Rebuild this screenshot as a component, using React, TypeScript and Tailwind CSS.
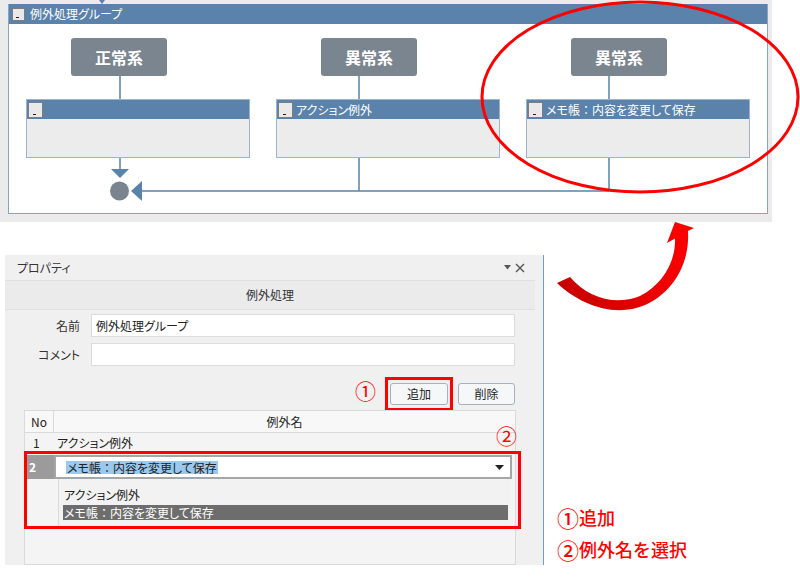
import React from "react";

// full-width colon keeps its em width, as in the original UI font
function Memo() {
  return (
    <>
      メモ帳<span className="[font-feature-settings:normal]">：</span>内容を変更して保存
    </>
  );
}

const columns = [
  { title: "正常系", label: null as React.ReactNode },
  { title: "異常系", label: "アクション例外" as React.ReactNode },
  { title: "異常系", label: <Memo /> },
];

function Collapse({ big }: { big?: boolean }) {
  return (
    <span
      className={`flex shrink-0 items-end justify-center border border-[#7d7d7d] bg-[#e9e9e9] pb-[2px] ${
        big ? "h-[16px] w-[15px]" : "h-[13px] w-[13px]"
      }`}
    >
      <span className="mr-[2px] h-[1px] w-[3px] bg-[#222]" />
    </span>
  );
}

function Diagram() {
  return (
    <div className="h-[222px] w-[772px] bg-[#ebebeb] pl-[8px] pt-[4px]">
      <div className="h-[210px] w-[760px] border-x border-b border-[#86a4c6] bg-white">
        <div className="flex h-[20px] items-center gap-[5px] bg-[#5a82aa] pl-[3px] text-[12px] text-white">
          <Collapse />
          <span>例外処理グループ</span>
        </div>
        <div className="flex gap-[26px] pl-[17px] pt-[14px]">
          {columns.map((c, i) => (
            <div key={i} className="w-[224px]">
              <div className="ml-[45px] flex h-[38px] w-[96px] items-center justify-center rounded-[3px] bg-[#7b858f] text-[16px] font-bold text-white">
                {c.title}
              </div>
              <div className="mt-[23px] h-[59px] border border-[#9db4cd] bg-[#ececec]">
                <div className="flex h-[19px] items-center gap-[3px] bg-[#5a82aa] pl-[1px] text-[12px] text-white">
                  <Collapse big />
                  <span>{c.label}</span>
                </div>
              </div>
            </div>
          ))}
        </div>
      </div>
    </div>
  );
}

function Panel() {
  return (
    <div className="ml-[5px] mt-[33px] h-[310px] w-[539px] border-r border-[#6a9fd4] bg-[#f0f0f0]">
      <div className="flex h-[25px] items-center justify-between pl-[12px] pr-[18px] text-[12px] text-[#333]">
        <span>プロパティ</span>
        <div className="flex items-center gap-[4px]">
          <svg width="7" height="5" viewBox="0 0 7 5">
            <path d="M0 0 H7 L3.5 4.5 Z" fill="#555" />
          </svg>
          <svg width="10" height="10" viewBox="0 0 10 10">
            <path d="M1 1 L9 9 M9 1 L1 9" stroke="#555" strokeWidth="1.4" />
          </svg>
        </div>
      </div>
      <div className="mr-[8px] flex h-[30px] items-center justify-center border-y border-[#e0e0e0] bg-[#ebebeb] text-[12px] text-[#333]">
        例外処理
      </div>
      <div className="relative">
        <div className="mt-[4px] flex items-center">
          <span className="w-[77px] pr-[2px] text-right text-[12px] text-[#333]">名前</span>
          <div className="ml-[9px] flex h-[23px] w-[424px] items-center border border-[#dcdcdc] bg-white pl-[4px] text-[12px] text-[#222]">
            例外処理グループ
          </div>
        </div>
        <div className="mt-[6px] flex items-center">
          <span className="w-[77px] pr-[2px] text-right text-[12px] text-[#333]">コメント</span>
          <div className="ml-[9px] h-[23px] w-[424px] border border-[#dcdcdc] bg-white" />
        </div>
        <div className="mt-[17px] flex items-center">
          <span className="-mt-[8px] ml-[350px] w-[35px] text-[21px] leading-none text-[#ff0000] [font-feature-settings:normal]">①</span>
          <div className="relative">
            <div className="flex h-[22px] w-[58px] items-center justify-center rounded-[3px] border border-[#a3b1c1] bg-[#f5f7f9] text-[12px] text-[#222]">
              追加
            </div>
            <div className="absolute -left-[5px] -top-[6px] h-[34px] w-[68px] border-[3px] border-[#ff0000]" />
          </div>
          <div className="ml-[10px] flex h-[22px] w-[57px] items-center justify-center rounded-[3px] border border-[#a3b1c1] bg-[#f5f7f9] text-[12px] text-[#222]">
            削除
          </div>
        </div>

        <div className="relative ml-[19px] mt-[5px] h-[155px] w-[492px] border border-[#dadada] bg-[#f4f4f4] text-[12px] text-[#222]">
          <div className="flex h-[22px] border-b border-[#dadada] bg-[#f8f8f8]">
            <div className="flex w-[29px] items-center justify-center border-r border-[#dadada]">No</div>
            <div className="flex flex-1 items-center justify-center">例外名</div>
          </div>
          <div className="flex h-[19px] items-center">
            <div className="w-[29px] pl-[8px]">1</div>
            <div className="pl-[3px]">アクション例外</div>
          </div>
          <div className="mt-[3px] flex h-[24px]">
            <div className="flex w-[29px] items-center bg-[#9b9b9b] pl-[4px] font-bold text-white">2</div>
            <div className="flex w-[458px] items-center justify-between border-2 border-[#a6a6a6] bg-white pl-[10px] pr-[6px]">
              <span className="bg-[#99c9ef] px-[1px] leading-[13px]">
                <Memo />
              </span>
              <svg width="9" height="5" viewBox="0 0 9 5">
                <path d="M0 0 H9 L4.5 5 Z" fill="#222" />
              </svg>
            </div>
          </div>
          <div className="flex h-[48px]">
            <div className="w-[33px]" />
            <div className="flex w-[453px] flex-col border-l border-[#dadada] bg-[#f2f2f2] pl-[4px] pt-[7px]">
              <div className="h-[18px] pl-[1px]">アクション例外</div>
              <div className="mt-[1px] flex h-[15px] w-[445px] items-center bg-[#6d6d6d] pl-[1px] text-white">
                <Memo />
              </div>
            </div>
          </div>
          <span className="absolute left-[471px] top-[14px] text-[21px] leading-none text-[#ff0000] [font-feature-settings:normal]">②</span>
          <div className="absolute -left-px top-[40px] h-[78px] w-[497px] border-[3px] border-[#ff0000]" />
        </div>
      </div>
    </div>
  );
}

function Overlay() {
  return (
    <svg className="pointer-events-none absolute left-0 top-0" width="800" height="577" viewBox="0 0 800 577">
      <defs>
        <linearGradient id="arrowFill" x1="557" y1="300" x2="694" y2="225" gradientUnits="userSpaceOnUse">
          <stop offset="0" stopColor="#c40000" />
          <stop offset="0.6" stopColor="#ee0000" />
          <stop offset="1" stopColor="#ff0000" />
        </linearGradient>
      </defs>
      <path d="M99 0 H105 L102 4 Z" fill="#5a82aa" />
      <g stroke="#5a82aa" strokeWidth="1.5" fill="none">
        <path d="M120 76 V99 M359 76 V99 M609 76 V99" />
        <path d="M120 158 V170 M359 158 V191 M609 158 V191 M141 191 H609" />
      </g>
      <path d="M111 169 H129 L120 178 Z" fill="#5a82aa" />
      <path d="M131 191 L142 181 V201 Z" fill="#5a82aa" />
      <circle cx="119.5" cy="191" r="9.5" fill="#7a848e" />
      <ellipse cx="640" cy="97" rx="158" ry="95" fill="none" stroke="#ff0000" strokeWidth="3" />
      <path
        d="M557 283 C580 305 615 318 645 305 C672 293 690 265 688 231 L694 228 L675 222 L667 243 L675 238.5 C676 262 662 285 640 296 C615 306 588 298 570 277 Z"
        fill="url(#arrowFill)"
      />
    </svg>
  );
}

export default function App() {
  return (
    <div className="relative h-[577px] w-[800px] overflow-hidden bg-white font-['Noto_Sans_CJK_JP','Noto_Sans',sans-serif] [font-feature-settings:'palt']">
      <Diagram />
      <div className="flex">
        <Panel />
        <div className="flex flex-col pl-[13px] pt-[279px] text-[18px] font-medium leading-[32px] text-[#ff0000] [font-feature-settings:normal]">
          <span className="flex items-center">
            <span className="text-[22px] leading-none">①</span>追加
          </span>
          <span className="flex items-center">
            <span className="text-[22px] leading-none">②</span>例外名を選択
          </span>
        </div>
      </div>
      <Overlay />
    </div>
  );
}
